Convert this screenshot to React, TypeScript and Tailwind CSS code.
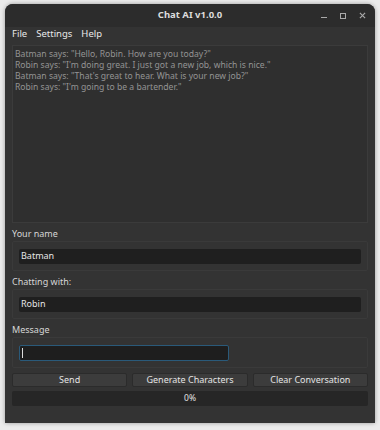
import React from 'react';

const lines = [
  'Batman says: "Hello, Robin. How are you today?"',
  'Robin says: "I\'m doing great. I just got a new job, which is nice."',
  'Batman says: "That\'s great to hear. What is your new job?"',
  'Robin says: "I\'m going to be a bartender."',
];

function Field({ label, value, focused, tall }: { label: string; value?: string; focused?: boolean; tall?: boolean }) {
  return (
    <div className="flex flex-col">
      <div className="h-[18px] pt-[3px] flex items-center text-[#d6d6d6] text-[9px]">{label}</div>
      <div className={`border border-[#3a3a3a] rounded-[2px] px-[6px] flex items-center ${tall ? 'h-[31px]' : 'h-[30px]'}`}>
        {focused ? (
          <div className="w-[210px] h-[16px] bg-[#1e1e1e] border border-[#2a5a7a] rounded-[2px] flex items-center pl-[2px]">
            <div className="w-px h-[10px] bg-[#dddddd]" />
          </div>
        ) : (
          <div className="w-full h-[15px] bg-[#1f1f1f] rounded-[2px] flex items-center px-[2px] text-[9px] text-[#e6e6e6]">
            {value}
          </div>
        )}
      </div>
    </div>
  );
}

export default function App() {
  return (
    <div className="w-[380px] h-[430px] bg-[#ebebeb] pt-[4px] px-[5px] font-['Noto_Sans',sans-serif]">
      <div className="w-[370px] h-[419px] rounded-t-[8px] bg-[#333333] shadow-[0_0_4px_rgba(0,0,0,0.35)] flex flex-col overflow-hidden">
        {/* title bar */}
        <div className="h-[23px] bg-[#2c2c2c] flex items-center relative">
          <div className="flex-1 text-center text-[9.5px] font-bold text-[#dcdcdc]">Chat AI v1.0.0</div>
          <div className="absolute right-[9px] top-0 h-full flex items-center gap-[13px]">
            <div className="w-[6px] h-px bg-[#aaaaaa] mt-[3px]" />
            <div className="w-[6px] h-[6px] border border-[#aaaaaa]" />
            <svg width="7" height="7" viewBox="0 0 8 8">
              <path d="M1 1 L7 7 M7 1 L1 7" stroke="#aaaaaa" strokeWidth="1.3" />
            </svg>
          </div>
        </div>
        {/* menu */}
        <div className="h-[14px] flex items-center gap-[9px] px-[7px] text-[9.5px] text-[#e8e8e8]">
          <span>File</span>
          <span>Settings</span>
          <span>Help</span>
        </div>
        <div className="px-[7px] pt-[4px] flex flex-col flex-1">
          <div className="h-[178px] bg-[#2f2f2f] border border-[#3b3b3b] px-[2px] pt-[3px] text-[8.6px] leading-[11px] text-[#949494]">
            {lines.map((l) => (
              <div key={l}>{l}</div>
            ))}
          </div>
          <div className="flex flex-col">
            <Field label="Your name" value="Batman" />
            <Field label="Chatting with:" value="Robin" />
            <Field label="Message" focused tall />
          </div>
          <div className="mt-[5px] flex gap-[5px]">
            {['Send', 'Generate Characters', 'Clear Conversation'].map((b) => (
              <div
                key={b}
                className="flex-1 h-[14px] bg-[#3c3c3c] border border-[#2b2b2b] rounded-[2px] flex items-center justify-center text-[9px] text-[#e4e4e4]"
              >
                {b}
              </div>
            ))}
          </div>
          <div className="mt-[4px] h-[15px] bg-[#262626] rounded-[2px] flex items-center justify-center text-[8.5px] text-[#e4e4e4]">
            0%
          </div>
        </div>
      </div>
    </div>
  );
}
